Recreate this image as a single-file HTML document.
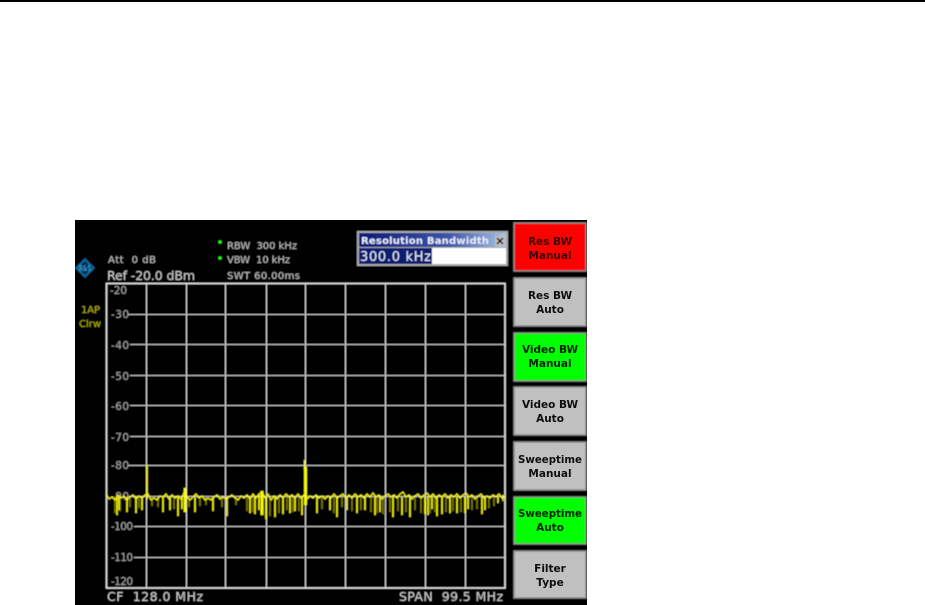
<!DOCTYPE html>
<html>
<head>
<meta charset="utf-8">
<style>
html,body{margin:0;padding:0;background:#fff;width:925px;height:605px;overflow:hidden}
svg{position:absolute;left:0;top:0;display:block}
text{font-family:"DejaVu Sans","Liberation Sans",sans-serif}
.b{font-weight:bold;font-size:10.500px;fill:#111;text-anchor:middle}
.g{font-size:10px;fill:#c0c0c0}
.t{font-size:10.500px;fill:#a4a4a4}
</style>
</head>
<body>
<svg width="925" height="605" viewBox="0 0 925 605" xmlns="http://www.w3.org/2000/svg">
<defs>
<filter id="s" x="0" y="0" width="100%" height="100%"><feGaussianBlur stdDeviation="0.42"/></filter>
<filter id="k" x="-5%" y="-20%" width="110%" height="140%"><feGaussianBlur stdDeviation="0.25"/></filter>
<linearGradient id="tb" x1="0" x2="1" y1="0" y2="0"><stop offset="0" stop-color="#0a1a78"/><stop offset="0.6" stop-color="#3a55a8"/><stop offset="1" stop-color="#a8c4e4"/></linearGradient>
</defs>
<rect x="0" y="0" width="925" height="2" fill="#000"/>
<rect x="75" y="220" width="512" height="385" fill="#000"/>
<g filter="url(#s)">
<rect x="75" y="220" width="512" height="385" fill="#000"/>

<!-- logo -->
<path d="M85 258L95 268L85 278L75 268Z" fill="#11689f"/>
<path d="M85 261L92 268L85 275L78 268Z" fill="#06263f"/>
<text x="85" y="271" font-size="8" font-weight="bold" fill="#2d9ad6" text-anchor="middle" textLength="12" lengthAdjust="spacingAndGlyphs">R&amp;S</text>

<!-- header -->
<text class="g" x="108" y="263" textLength="48" lengthAdjust="spacing" xml:space="preserve">Att  0 dB</text>
<text x="107" y="280" font-size="12.500" fill="#cccccc" textLength="88" lengthAdjust="spacing">Ref -20.0 dBm</text>
<circle cx="220" cy="242" r="1.800" fill="#20f020"/>
<circle cx="220" cy="258" r="1.800" fill="#20f020"/>
<text class="g" x="227" y="249" textLength="70" lengthAdjust="spacing" xml:space="preserve">RBW  300 kHz</text>
<text class="g" x="227" y="263" textLength="63" lengthAdjust="spacing" xml:space="preserve">VBW  10 kHz</text>
<text class="g" x="227" y="279" textLength="73" lengthAdjust="spacing">SWT 60.00ms</text>
<text x="81" y="313" font-size="10" fill="#b0b000" textLength="19" lengthAdjust="spacing">1AP</text>
<text x="79" y="327" font-size="10" fill="#b0b000" textLength="22" lengthAdjust="spacing">Clrw</text>

<!-- grid -->
<g fill="none">
<path stroke="#d8d8d8" stroke-width="1" d="M146.500 284V588M186.500 284V588M225.500 284V588M266.500 284V588M305.500 284V588M345.500 284V588M385.500 284V588M425.500 284V588M465.500 284V588"/>
<path stroke="#c0c0c0" stroke-width="1" d="M128 314.500H505M130 344.500H505M130 375.500H505M130 405.500H505M130 436.500H505M128 465.500H505M128 496.500H505M134 526.500H505M134 557.500H505"/>
</g>
<rect x="106.500" y="283.500" width="398.500" height="304.500" fill="none" stroke="#eeeeee" stroke-width="1.500"/>
<text class="t" x="110" y="294" textLength="17" lengthAdjust="spacing">-20</text>
<text class="t" x="111" y="318" textLength="18" lengthAdjust="spacing">-30</text>
<text class="t" x="111" y="349" textLength="18" lengthAdjust="spacing">-40</text>
<text class="t" x="111" y="380" textLength="18" lengthAdjust="spacing">-50</text>
<text class="t" x="111" y="410" textLength="18" lengthAdjust="spacing">-60</text>
<text class="t" x="111" y="441" textLength="18" lengthAdjust="spacing">-70</text>
<text class="t" x="111" y="469" textLength="18" lengthAdjust="spacing">-80</text>
<text class="t" x="111" y="500" textLength="18" lengthAdjust="spacing">-90</text>
<text class="t" x="111" y="530" textLength="22" lengthAdjust="spacing">-100</text>
<text class="t" x="111" y="561" textLength="22" lengthAdjust="spacing">-110</text>
<text class="t" x="111" y="585" textLength="22" lengthAdjust="spacing">-120</text>

<!-- trace -->
<g fill="none" stroke="#ffff00">
<path stroke="#7c7c00" stroke-width="1.600" d="M115 497V513M120 497V511M130 497V507M139 497V508M152 497V506M158 497V507M174 497V509M189 497V507M200 497V506M206 497V505M222 497V507M236 497V505M247 497V511M253 497V512M270 497V516M279 497V513M287 497V510M293 497V512M299 497V511M322 497V509M334 497V513M342 497V507M352 497V511M361 497V510M371 497V512M377 497V513M383 497V514M390 497V512M398 497V511M406 497V512M415 497V510M421 497V513M430 497V513M435 497V512M446 497V512M453 497V511M461 497V512M472 497V510M477 497V509M489 497V508M494 497V506"/>
<polyline stroke-width="1.100" points="106,494 109,499 112,497 115,500 118,495 121,498 124,496 127,500 130,497 133,495 136,499 139,496 142,498 145,495 148,494 151,500 154,498 157,500 160,496 163,497 166,494 169,499 172,495 175,498 178,496 181,499 184,493 187,497 190,500 193,497 196,494 199,498 202,496 205,500 208,498 211,500 214,497 217,495 220,499 223,497 226,499 229,497 232,495 235,498 238,500 241,496 244,498 247,495 250,499 253,494 256,498 259,494 262,492 265,498 268,494 271,500 274,496 277,499 280,495 283,498 286,494 289,497 292,495 295,498 298,494 301,498 304,495 307,499 310,496 313,498 316,495 319,498 322,496 325,499 328,496 331,498 334,494 337,498 340,496 343,494 346,498 349,495 352,498 355,494 358,497 361,495 364,498 367,494 370,497 373,493 376,497 379,495 382,499 385,496 388,494 391,497 394,495 397,498 400,494 403,492 406,497 409,495 412,499 415,496 418,494 421,498 424,495 427,493 430,497 433,494 436,498 439,495 442,497 445,494 448,498 451,495 454,497 457,494 460,498 463,495 466,493 469,497 472,495 475,499 478,496 481,494 484,498 487,496 490,498 493,495 496,497 499,494 502,498 505,497"/>
<path stroke-width="1.500" d="M117 497V515M119 497V510M127 497V512M136 497V513M142 497V510M163 497V512M170 497V510M178 497V516M182 497V509M195 497V512M213 497V511M227 497V516M250 497V513M255 497V514M259 494V510M266 497V519M275 497V517M283 497V514M290 497V513M295 497V511M302 497V515M317 497V513M330 497V510M337 497V517M347 497V510M357 497V513M365 497V510M375 497V515M380 497V512M393 497V517M402 497V515M410 497V517M425 497V514M428 497V515M432 497V509M437 497V516M442 497V514M450 497V513M457 497V513M465 497V513M468 497V509M482 497V514M485 497V510M498 497V503"/>
<path stroke-width="1.500" d="M147 465V499"/>
<path stroke-width="2.600" d="M185 488V512"/>
<path stroke-width="2.800" d="M262 491V515"/>
<path stroke-width="2.800" d="M305.500 467V505"/>
<path stroke-width="1.200" d="M304.500 460V470M503 495V501"/>
</g>

<text x="107" y="601" font-size="12.500" fill="#cccccc" textLength="96" lengthAdjust="spacing" xml:space="preserve">CF  128.0 MHz</text>
<text x="399" y="601" font-size="12.500" fill="#cccccc" textLength="104" lengthAdjust="spacing" xml:space="preserve">SPAN  99.5 MHz</text>

<!-- dialog -->
<rect x="357" y="231" width="151" height="35" fill="#a8a8a8"/>
<rect x="359" y="233" width="147" height="14" fill="url(#tb)"/>
<text x="361" y="244" font-size="10" font-weight="bold" fill="#e8ecf8" textLength="128" lengthAdjust="spacing">Resolution Bandwidth</text>
<rect x="495" y="236" width="10" height="10" fill="#c0c0c0"/>
<path d="M497 238L503 244M503 238L497 244" stroke="#000" stroke-width="1.500"/>
<rect x="359" y="248" width="147" height="16" fill="#fff"/>
<rect x="359" y="248" width="73" height="16" fill="#0c1f70"/>
<text x="360" y="261" font-size="13" fill="#e8ecf8" textLength="71" lengthAdjust="spacing">300.0 kHz</text>

<!-- softkeys -->
<g stroke="#8a8a8a" stroke-width="1.500">
<rect x="514" y="223" width="72" height="48" fill="#ff0000"/>
<rect x="514" y="278" width="72" height="48" fill="#c0c0c0"/>
<rect x="514" y="333" width="72" height="48" fill="#00ff00"/>
<rect x="514" y="387" width="72" height="48" fill="#c0c0c0"/>
<rect x="514" y="442" width="72" height="48" fill="#c0c0c0"/>
<rect x="514" y="497" width="72" height="47" fill="#00ff00"/>
<rect x="514" y="551" width="72" height="47" fill="#c0c0c0"/>
</g>
</g>
<g filter="url(#k)">
<text class="b" x="550" y="245" style="fill:#3a0000">Res BW</text>
<text class="b" x="550" y="259" style="fill:#3a0000">Manual</text>
<text class="b" x="550" y="299">Res BW</text>
<text class="b" x="550" y="313">Auto</text>
<text class="b" x="550" y="353" style="fill:#002000">Video BW</text>
<text class="b" x="550" y="367" style="fill:#002000">Manual</text>
<text class="b" x="550" y="408">Video BW</text>
<text class="b" x="550" y="422">Auto</text>
<text class="b" x="550" y="463" textLength="64" lengthAdjust="spacingAndGlyphs">Sweeptime</text>
<text class="b" x="550" y="477">Manual</text>
<text class="b" x="550" y="517" textLength="64" lengthAdjust="spacingAndGlyphs" style="fill:#002000">Sweeptime</text>
<text class="b" x="550" y="531" style="fill:#002000">Auto</text>
<text class="b" x="550" y="572">Filter</text>
<text class="b" x="550" y="586">Type</text>
</g>
</svg>
</body>
</html>
